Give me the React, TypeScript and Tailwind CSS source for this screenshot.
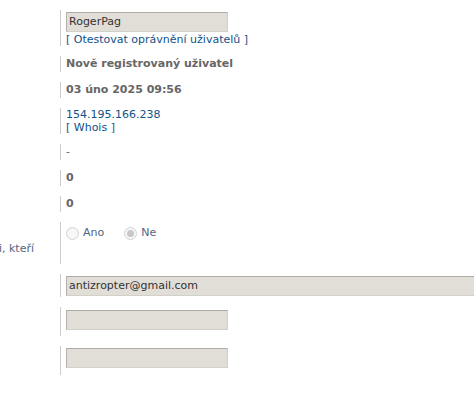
import React from "react";

const font = { fontFamily: '"DejaVu Sans", Verdana, sans-serif' };

function Row({
  h,
  children,
  label,
}: {
  h: string;
  children?: React.ReactNode;
  label?: React.ReactNode;
}) {
  return (
    <div className="flex mb-[10px]">
      <div className="w-[60px] shrink-0 relative overflow-hidden">{label}</div>
      <div className={`border-l border-[#cccccc] pl-[5px] ${h} min-w-0 flex-1`}>{children}</div>
    </div>
  );
}

function Input({ value, wide }: { value?: string; wide?: boolean }) {
  return (
    <div
      className={`${wide ? "w-[430px]" : "w-[162px]"} h-[20px] bg-[#e1ddd7] border border-t-[#aeaba6] border-l-[#b4b1ab] border-b-[#d3d1c7] border-r-[#d3d1c7] text-[11px] leading-[18px] text-[#333333] pl-[2px] whitespace-nowrap overflow-hidden`}
    >
      {value}
    </div>
  );
}

function Radio({ checked }: { checked?: boolean }) {
  return (
    <span className="inline-flex w-[13px] h-[13px] rounded-full border border-[#d2d2d2] bg-[#f7f7f7] items-center justify-center">
      {checked && <span className="w-[7px] h-[7px] rounded-full bg-[#c8c8c8]" />}
    </span>
  );
}

export default function App() {
  return (
    <div className="w-[474px] h-[414px] overflow-hidden bg-white pt-[10px]" style={font}>
      <Row h="h-[36px]">
        <div className="pt-[2px]">
          <Input value="RogerPag" />
        </div>
        <div className="text-[11px] leading-[15px] text-[#105289] whitespace-nowrap">
          [ Otestovat oprávnění uživatelů ]
        </div>
      </Row>
      <Row h="h-[16px]">
        <div className="text-[11px] leading-[16px] font-bold text-[#666666] whitespace-nowrap">
          Nově registrovaný uživatel
        </div>
      </Row>
      <Row h="h-[16px]">
        <div className="text-[11px] leading-[16px] font-bold text-[#666666] whitespace-nowrap">
          03 úno 2025 09:56
        </div>
      </Row>
      <Row h="h-[26px]">
        <div className="text-[11px] leading-[13px] text-[#105289]">154.195.166.238</div>
        <div className="text-[11px] leading-[13px] text-[#105289]">[ Whois ]</div>
      </Row>
      <Row h="h-[16px]">
        <div className="text-[11px] leading-[16px] text-[#666666]">-</div>
      </Row>
      <Row h="h-[16px]">
        <div className="text-[11px] leading-[16px] font-bold text-[#666666]">0</div>
      </Row>
      <Row h="h-[16px]">
        <div className="text-[11px] leading-[16px] font-bold text-[#666666]">0</div>
      </Row>
      <Row
        h="h-[42px]"
        label={
          <div className="absolute right-[26px] top-[20px] text-[11px] leading-[13px] text-[#536482] whitespace-nowrap">
            i, kteří
          </div>
        }
      >
        <div className="flex items-center h-[21px] pt-[2px] text-[11px] text-[#536482]">
          <Radio />
          <span className="ml-[4px]">Ano</span>
          <span className="ml-[20px] flex items-center">
            <Radio checked />
            <span className="ml-[4px]">Ne</span>
          </span>
        </div>
      </Row>
      <Row h="h-[23px]">
        <div className="pt-[2px]">
          <Input value="antizropter@gmail.com" wide />
        </div>
      </Row>
      <Row h="h-[29px]">
        <div className="pt-[3px]">
          <Input />
        </div>
      </Row>
      <Row h="h-[29px]">
        <div className="pt-[2px]">
          <Input />
        </div>
      </Row>
    </div>
  );
}
